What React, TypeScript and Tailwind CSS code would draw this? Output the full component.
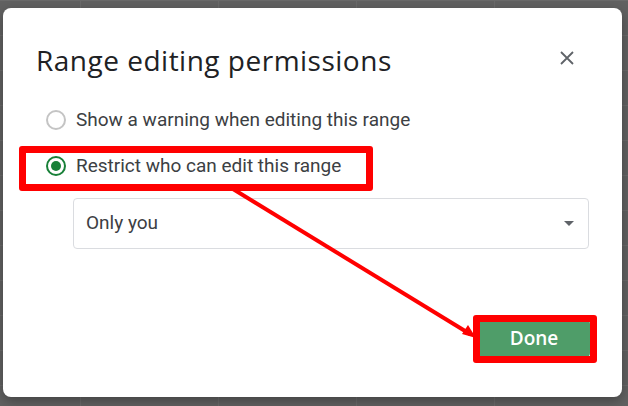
export default function App() {
  return (
    <div className="relative h-[406px] w-[628px] overflow-hidden bg-[#616161] bg-[linear-gradient(to_right,#6a6a6a_1px,transparent_1px),linear-gradient(to_bottom,#6a6a6a_1px,transparent_1px)] bg-[size:138px_35px] bg-[position:80px_0px] pl-[3px] pt-[8px]">
      {/* Dialog */}
      <div className="flex h-[389px] w-[619px] flex-col rounded-lg bg-white pt-[34px] font-['Roboto',sans-serif] shadow-[0_4px_12px_rgba(0,0,0,0.3)]">
        <div className="flex items-center justify-between pl-[33px] pr-[47px]">
          <h1 className="font-['Open_Sans',sans-serif] text-[28px] leading-[36px] font-normal tracking-[0.5px] text-[#202124]">
            Range editing permissions
          </h1>
          <svg width="16" height="16" viewBox="0 0 16 16" className="mt-[-4px]">
            <path d="M2 2 L14 14 M14 2 L2 14" stroke="#5f6368" strokeWidth="1.8" />
          </svg>
        </div>

        <div className="mt-[24px] flex flex-col gap-[10px] pl-[43px]">
          <label className="flex h-[36px] items-center gap-[10px]">
            <span className="h-[20px] w-[20px] rounded-full border-2 border-[#c4c4c4]" />
            <span className="text-[19px] text-[#3c4043]">
              Show a warning when editing this range
            </span>
          </label>
          <label className="flex h-[36px] items-center gap-[10px]">
            <span className="flex h-[20px] w-[20px] items-center justify-center rounded-full border-2 border-[#188038]">
              <span className="h-[10px] w-[10px] rounded-full bg-[#188038]" />
            </span>
            <span className="text-[19px] text-[#3c4043]">
              Restrict who can edit this range
            </span>
          </label>
        </div>

        <div className="mt-[14px] pl-[70px] pr-[33px]">
          <div className="flex h-[51px] items-center justify-between rounded border border-[#dadce0] pl-[12px] pr-[14px]">
            <span className="text-[19px] text-[#3c4043]">Only you</span>
            <svg width="10" height="5" viewBox="0 0 10 5">
              <path d="M0 0 L10 0 L5 5 Z" fill="#5f6368" />
            </svg>
          </div>
        </div>

        <div className="mt-[71px] flex justify-end pr-[32px]">
          <button className="h-[37px] w-[112px] rounded bg-[#4f9d69] text-[19px] font-semibold text-white font-['Open_Sans',sans-serif]">
            Done
          </button>
        </div>
      </div>

      {/* Annotations */}
      <div className="absolute left-[19px] top-[146px] h-[45px] w-[354px] rounded-[3px] border-[7px] border-[#ff0000]" />
      <div className="absolute left-[473px] top-[315px] h-[48px] w-[124px] rounded-[3px] border-[7px] border-[#ff0000]" />
      <svg className="absolute left-0 top-0" width="628" height="406">
        <line x1="233" y1="189" x2="470" y2="334" stroke="#ff0000" strokeWidth="4" />
        <path d="M476 338 L462 334 L468 325 Z" fill="#ff0000" />
      </svg>
    </div>
  );
}
